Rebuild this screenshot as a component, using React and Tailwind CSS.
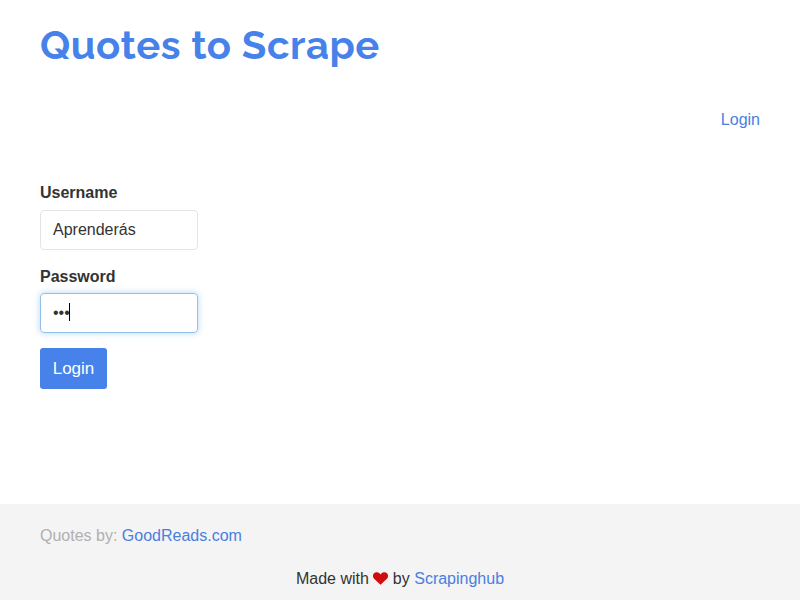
export default function App() {
  return (
    <div className="flex h-[600px] w-[800px] flex-col overflow-hidden bg-white font-['Liberation_Sans',Arial,sans-serif] text-base leading-6 text-[#333]">
      <main className="h-[504px] px-10">
        <h1 className="pt-[22px] font-['Raleway','Open_Sans',sans-serif] text-[40px] leading-[46px] font-bold tracking-[0.56px] whitespace-nowrap text-[#4682ea]">
          <a>Quotes to Scrape</a>
        </h1>
        <div className="mt-[40px] text-right text-[#4a7ee0]">Login</div>
        <form className="mt-[49px] w-[158px]">
          <label className="block font-bold">Username</label>
          <div className="mt-[5px] flex h-10 items-center rounded border border-[#e4e4e4] px-3">Aprenderás</div>
          <label className="mt-[15px] block font-bold">Password</label>
          <div className="mt-[4px] flex h-10 items-center rounded border border-[#92c0ea] px-3 shadow-[0_0_6px_rgba(102,175,233,0.5)]">
            <span className="-mt-px">•••</span>
            <span className="-mt-0.5 -ml-px h-[18px] w-px bg-black" />
          </div>
          <button type="button" className="mt-[15px] flex h-[41px] w-[67px] items-center justify-center rounded-[3px] bg-[#4682ea] text-[17px] text-white">Login</button>
        </form>
      </main>
      <footer className="h-24 bg-[#f4f4f4] px-10 pt-5">
        <p className="text-[#b0b0b0]">Quotes by: <a className="text-[#4a7ee0]">GoodReads.com</a></p>
        <p className="mt-[19px] flex justify-center">
          <span>Made with</span>
          <svg className="mt-[5px] mr-[5px] ml-1 h-[13px] w-[15px]" viewBox="0 0 15 13" fill="#d00c0c"><path d="M7.5 12.8 1.1 6.7C-1.7 3.2 1.1-.2 4.1.2 5.7.4 6.8 1.4 7.5 2.4 8.2 1.4 9.3.4 10.9.2 13.9-.2 16.7 3.2 13.9 6.7Z" /></svg>
          <span>by <a className="text-[#4a7ee0]">Scrapinghub</a></span>
        </p>
      </footer>
    </div>
  );
}
